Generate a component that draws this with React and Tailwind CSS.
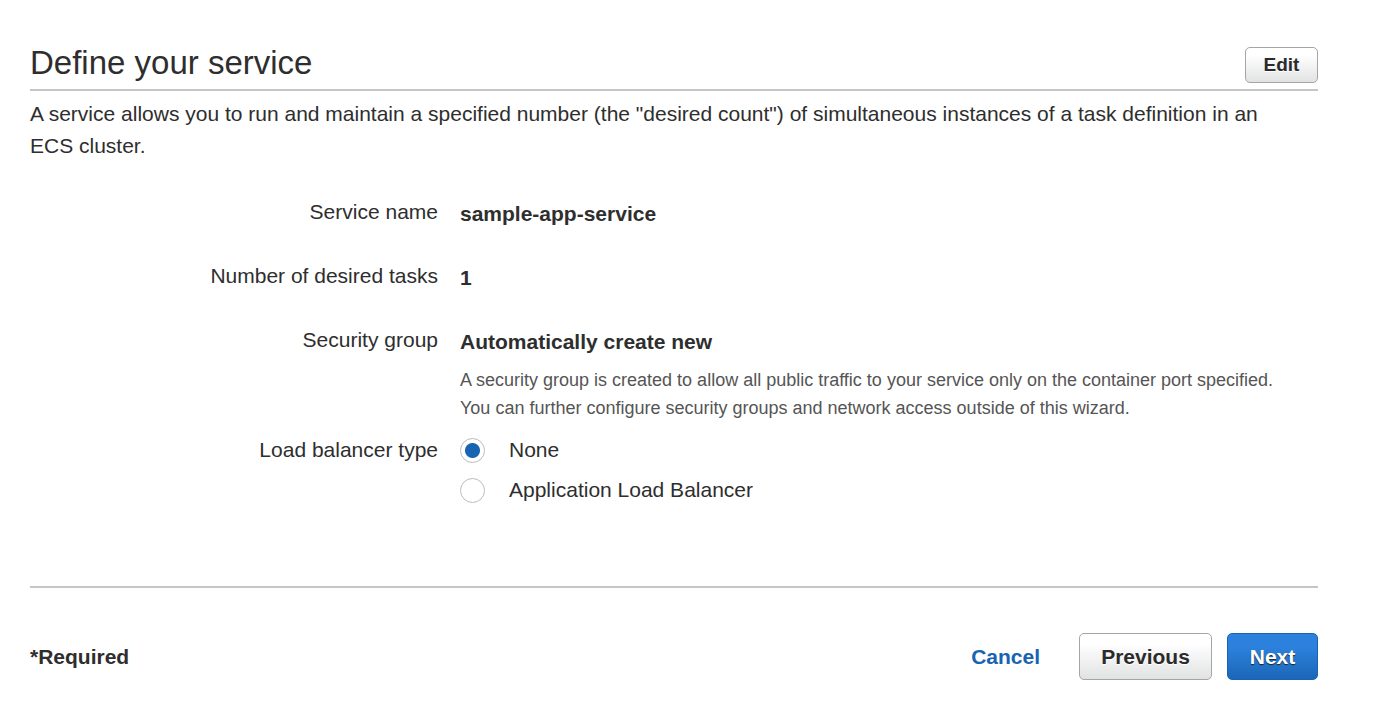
const btn = "rounded-[5px] border border-[#a5a5a5] bg-linear-to-b from-[#ffffff] from-20% to-[#e1e3e2] font-bold text-[#2b2b2b] text-shadow-[0_1px_0_#ffffff]";

function Row({ label, children }) {
  return (
    <div className="flex gap-[22px]">
      <dt className="w-[408px] shrink-0 text-right leading-7">{label}</dt>
      <dd className="min-w-0 flex-1">{children}</dd>
    </div>
  );
}

function Option({ label, ...rest }) {
  return (
    <label className="flex items-center gap-6">
      <input
        type="radio"
        name="load-balancer"
        className="size-[25px] appearance-none rounded-full border border-[#bcbcbc] bg-white checked:bg-radial checked:from-[#1764b3] checked:from-[7px] checked:to-white checked:to-[8px]"
        {...rest}
      />
      {label}
    </label>
  );
}

export default function App() {
  return (
    <main className="bg-white pt-10 pr-[82px] pb-8 pl-[30px] font-['Liberation_Sans',Arial,sans-serif] text-[21px] leading-8 text-[#2e2e2e]">
      <header className="flex items-start justify-between border-b-2 border-[#c6c6c6] pt-[7px] pb-1.5">
        <h1 className="text-[33px] leading-8">Define your service</h1>
        <button type="button" className={`${btn} h-9 w-[73px] text-[19px] leading-6`}>Edit</button>
      </header>
      <p className="pt-[7px] pr-8">
        A service allows you to run and maintain a specified number (the "desired count") of simultaneous instances of a task definition in an ECS cluster.
      </p>
      <dl className="mt-9 flex flex-col gap-8">
        <Row label="Service name"><b>sample-app-service</b></Row>
        <Row label="Number of desired tasks"><b>1</b></Row>
        <Row label="Security group">
          <b>Automatically create new</b>
          <p className="mt-2 pr-5 text-[18px] leading-7 text-[#555555]">
            A security group is created to allow all public traffic to your service only on the container port specified. You can further configure security groups and network access outside of this wizard.
          </p>
        </Row>
      </dl>
      <fieldset className="mt-3 flex gap-[22px]">
        <legend className="float-left w-[408px] text-right">Load balancer type</legend>
        <div className="flex flex-col gap-2">
          <Option label="None" defaultChecked />
          <Option label="Application Load Balancer" />
        </div>
      </fieldset>
      <footer className="mt-20 flex items-center justify-between border-t-2 border-[#c6c6c6] pt-[45px]">
        <b>*Required</b>
        <div className="flex items-center gap-[15px]">
          <a href="#cancel" className="mr-6 font-bold text-[#1764b3]">Cancel</a>
          <button type="button" className={`${btn} h-[47px] w-[133px]`}>Previous</button>
          <button type="button" className="h-[47px] w-[91px] rounded-[5px] border border-[#1764b3] bg-linear-to-b from-[#2b81dc] from-30% to-[#1b67b8] font-bold text-white text-shadow-[0_1px_1px_#202020]">Next</button>
        </div>
      </footer>
    </main>
  );
}
